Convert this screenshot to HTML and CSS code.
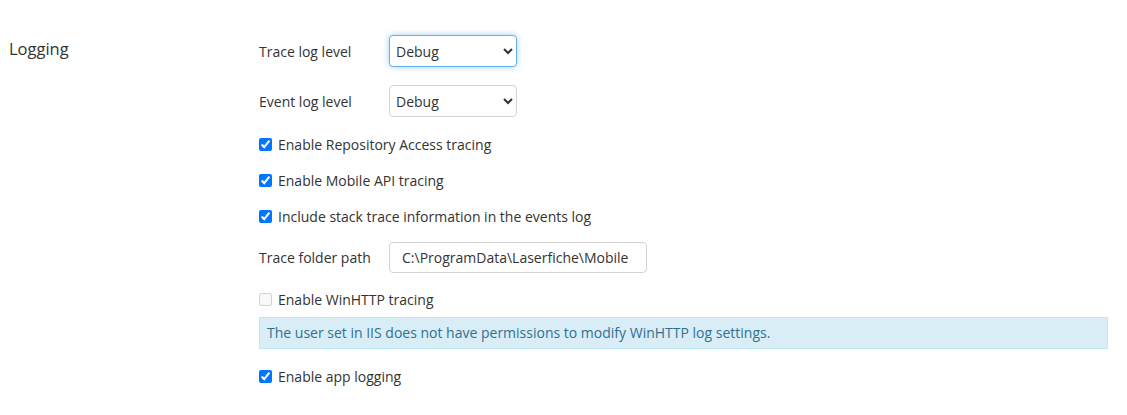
FILE: index.html
```html
<!DOCTYPE html>
<html>
  <head>
    <meta charset="UTF-8">
    <title>Logging</title>
    <link rel="stylesheet" href="styles.css">
  </head>
  <body>
    <div class="section">
      <h2 class="section-title">Logging</h2>
      <div class="section-body">
        <div class="field">
          <label class="field-label" for="trace-level">Trace log level</label>
          <select id="trace-level" class="control select focused">
            <option>Debug</option>
            <option>Info</option>
            <option>Warning</option>
            <option>Error</option>
          </select>
        </div>
        <div class="field">
          <label class="field-label" for="event-level">Event log level</label>
          <select id="event-level" class="control select">
            <option>Debug</option>
            <option>Info</option>
            <option>Warning</option>
            <option>Error</option>
          </select>
        </div>
        <label class="check"><input type="checkbox" checked> Enable Repository Access tracing</label>
        <label class="check"><input type="checkbox" checked> Enable Mobile API tracing</label>
        <label class="check"><input type="checkbox" checked> Include stack trace information in the events log</label>
        <div class="field field-path">
          <label class="field-label" for="trace-path">Trace folder path</label>
          <input id="trace-path" class="control text" type="text" value="C:\ProgramData\Laserfiche\Mobile">
        </div>
        <label class="check disabled"><input type="checkbox" disabled> Enable WinHTTP tracing</label>
        <div class="alert">The user set in IIS does not have permissions to modify WinHTTP log settings.</div>
        <label class="check"><input type="checkbox" checked> Enable app logging</label>
      </div>
    </div>
  </body>
</html>
```

FILE: styles.css
```css
body {
  margin: 0;
  font-family: "Open Sans", "Noto Sans", sans-serif;
  font-size: 14px;
  color: #333;
}

.section {
  display: flex;
  padding: 35px 19px 0 9px;
}

.section-title {
  width: 250px;
  margin: 0;
  font-size: 16.5px;
  font-weight: normal;
  line-height: 28px;
}

.section-body {
  flex: 1;
  display: flex;
  flex-direction: column;
}

.field {
  display: flex;
  align-items: center;
  margin-bottom: 18px;
}

.field-path {
  margin-top: 16px;
  margin-bottom: 0;
}

.field-label {
  width: 130px;
}

.control {
  font-family: inherit;
  font-size: 14px;
  color: #333;
  border: 1px solid #d4d4d4;
  border-radius: 4px;
  background: #fff;
  box-sizing: border-box;
}

.select {
  width: 128px;
  height: 32px;
  padding: 0 2px;
}

.select.focused {
  border-color: #66afe9;
  outline: none;
  box-shadow: 0 0 6px rgba(102, 175, 233, 0.6);
}

.text {
  width: 258px;
  height: 31px;
  padding: 0 12px;
}

.check {
  display: flex;
  align-items: center;
  height: 20px;
  margin-top: 16px;
}

.field + .field + .check {
  margin-top: -1px;
}

.check input {
  width: 13px;
  height: 13px;
  margin: 0 6px 0 0;
}

.alert {
  margin-top: 8px;
  padding: 6px 7px;
  line-height: 18px;
  background: #d9edf7;
  border: 1px solid #bce8f1;
  color: #31708f;
}

.alert + .check {
  margin-top: 17px;
}
```
